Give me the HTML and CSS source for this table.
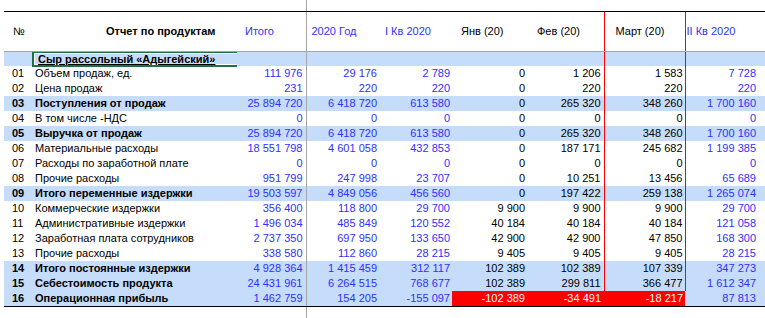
FILE: index.html
```html
<!DOCTYPE html>
<html lang="ru">
    <head>
        <meta charset="UTF-8" />
        <title>Отчет по продуктам</title>
        <link rel="stylesheet" href="styles.css">
    </head>
    <body>
        <table class="report">
            <colgroup>
                <col class="c-num"><col class="c-name"><col class="c-tot"><col class="c-year"><col class="c-q">
                <col class="c-m"><col class="c-m"><col class="c-m2"><col class="c-q2">
            </colgroup>
            <tr class="gap top"><td></td><td></td><td></td><td></td><td></td><td></td><td></td><td></td><td></td></tr>
            <tr class="head r">
                <th>№</th>
                <th class="title-head">Отчет по продуктам</th>
                <th class="blue">Итого</th>
                <th class="blue">2020 Год</th>
                <th class="blue">I Кв 2020</th>
                <th>Янв (20)</th>
                <th>Фев (20)</th>
                <th>Март (20)</th>
                <th class="blue">II Кв 2020</th>
            </tr>
            <tr class="product hl r">
                <td></td>
                <td class="product-cell"><div class="selected">Сыр рассольный «Адыгейский»</div></td>
                <td></td><td></td><td></td><td></td><td></td><td></td><td></td>
            </tr>
            <tr class="r"><td>01</td><td>Объем продаж, ед.</td><td>111 976</td><td>29 176</td><td>2 789</td><td>0</td><td>1 206</td><td>1 583</td><td>7 728</td></tr>
            <tr class="r"><td>02</td><td>Цена продаж</td><td>231</td><td>220</td><td>220</td><td>0</td><td>220</td><td>220</td><td>220</td></tr>
            <tr class="r hl"><td>03</td><td>Поступления от продаж</td><td>25 894 720</td><td>6 418 720</td><td>613 580</td><td>0</td><td>265 320</td><td>348 260</td><td>1 700 160</td></tr>
            <tr class="r"><td>04</td><td>В том числе -НДС</td><td>0</td><td>0</td><td>0</td><td>0</td><td>0</td><td>0</td><td>0</td></tr>
            <tr class="r hl"><td>05</td><td>Выручка от продаж</td><td>25 894 720</td><td>6 418 720</td><td>613 580</td><td>0</td><td>265 320</td><td>348 260</td><td>1 700 160</td></tr>
            <tr class="r"><td>06</td><td>Материальные расходы</td><td>18 551 798</td><td>4 601 058</td><td>432 853</td><td>0</td><td>187 171</td><td>245 682</td><td>1 199 385</td></tr>
            <tr class="r"><td>07</td><td>Расходы по заработной плате</td><td>0</td><td>0</td><td>0</td><td>0</td><td>0</td><td>0</td><td>0</td></tr>
            <tr class="r"><td>08</td><td>Прочие расходы</td><td>951 799</td><td>247 998</td><td>23 707</td><td>0</td><td>10 251</td><td>13 456</td><td>65 689</td></tr>
            <tr class="r hl"><td>09</td><td>Итого переменные издержки</td><td>19 503 597</td><td>4 849 056</td><td>456 560</td><td>0</td><td>197 422</td><td>259 138</td><td>1 265 074</td></tr>
            <tr class="r"><td>10</td><td>Коммерческие издержки</td><td>356 400</td><td>118 800</td><td>29 700</td><td>9 900</td><td>9 900</td><td>9 900</td><td>29 700</td></tr>
            <tr class="r"><td>11</td><td>Административные издержки</td><td>1 496 034</td><td>485 849</td><td>120 552</td><td>40 184</td><td>40 184</td><td>40 184</td><td>121 058</td></tr>
            <tr class="r"><td>12</td><td>Заработная плата сотрудников</td><td>2 737 350</td><td>697 950</td><td>133 650</td><td>42 900</td><td>42 900</td><td>47 850</td><td>168 300</td></tr>
            <tr class="r"><td>13</td><td>Прочие расходы</td><td>338 580</td><td>112 860</td><td>28 215</td><td>9 405</td><td>9 405</td><td>9 405</td><td>28 215</td></tr>
            <tr class="r hl"><td>14</td><td>Итого постоянные издержки</td><td>4 928 364</td><td>1 415 459</td><td>312 117</td><td>102 389</td><td>102 389</td><td>107 339</td><td>347 273</td></tr>
            <tr class="r hl"><td>15</td><td>Себестоимость продукта</td><td>24 431 961</td><td>6 264 515</td><td>768 677</td><td>102 389</td><td>299 811</td><td>366 477</td><td>1 612 347</td></tr>
            <tr class="hl last"><td>16</td><td>Операционная прибыль</td><td>1 462 759</td><td>154 205</td><td>-155 097</td><td class="neg">-102 389</td><td class="neg">-34 491</td><td class="neg">-18 217</td><td>87 813</td></tr>
            <tr class="gap bottom"><td></td><td></td><td></td><td></td><td></td><td></td><td></td><td></td><td></td></tr>
        </table>
    </body>
</html>
```

FILE: styles.css
```css
body {
    margin: 0;
    font-family: "Liberation Sans", Arial, sans-serif;
    font-size: 11px;
    color: #000;
    background: #fff;
}
.report {
    border-collapse: collapse;
    table-layout: fixed;
    width: 761px;
    margin-left: 4px;
}
.c-num { width: 28px; }
.c-name { width: 205px; }
.c-tot { width: 69px; }
.c-year { width: 74px; }
.c-q { width: 72px; }
.c-m { width: 76px; }
.c-m2 { width: 81px; }
.c-q2 { width: 80px; }

.report td,
.report th {
    height: 15px;
    padding: 0 3px 0 0;
    line-height: 13px;
    white-space: nowrap;
    text-align: right;
    vertical-align: middle;
}
.report td:nth-child(3),
.report td:nth-child(4),
.report td:nth-child(5),
.report td:nth-child(9),
.report th.blue {
    color: #3030ff;
}
.report td:nth-child(1) {
    text-align: left;
    padding-left: 8px;
}
.report td:nth-child(2) {
    text-align: left;
    padding-left: 3px;
}
.report td:nth-child(5),
.report td:nth-child(8) {
    padding-right: 2px;
}
.report td:nth-child(9) {
    padding-right: 9px;
}

/* vertical rules */
.report td:nth-child(3),
.report th:nth-child(3) {
    border-right: 1px solid #a6a6a6;
}
.report .r td:nth-child(7),
.report .r td:nth-child(8),
.report .r th:nth-child(7),
.report .r th:nth-child(8) {
    border-right: 1px solid #ff0000;
}

/* header */
.gap.top td {
    height: 11px;
    border-bottom: 1px solid #000;
}
.gap.bottom td {
    height: 12px;
}
.head th {
    height: 39px;
    font-weight: normal;
    text-align: left;
    border-bottom: 1px solid #a6a6a6;
    padding: 0;
}
.head th:nth-child(1) { padding-left: 9px; }
.head th:nth-child(2) { padding-left: 74px; font-weight: bold; }
.head th:nth-child(3) { padding-left: 8px; }
.head th:nth-child(4) { padding-left: 5px; }
.head th:nth-child(5) { padding-left: 5px; }
.head th:nth-child(6) { padding-left: 9px; }
.head th:nth-child(7) { padding-left: 9px; }
.head th:nth-child(8) { padding-left: 11px; }
.head th:nth-child(9) { padding-left: 1px; }

/* highlighted rows */
.hl td {
    background: #c5dcfa;
}
.hl td:nth-child(1),
.hl td:nth-child(2) {
    font-weight: bold;
}
.product td {
    height: 14px;
}
.report td.product-cell {
    padding: 0;
}
.selected {
    height: 12px;
    margin: -1px 0;
    padding-left: 4px;
    line-height: 12px;
    border: 2px solid #1e7145;
    border-right: 0;
    box-shadow: inset 1px 1px 0 #fff, inset 0 -1px 0 #fff;
    font-weight: bold;
    text-decoration: underline;
}
.last td {
    border-bottom: 1px solid #000;
}
.report .last td.neg {
    background: #ff0000;
    color: #fff;
}
```
